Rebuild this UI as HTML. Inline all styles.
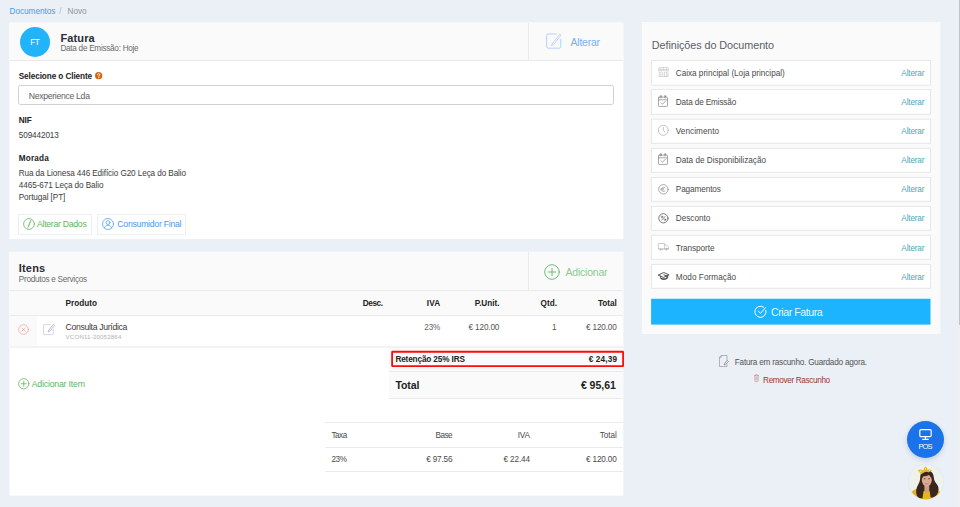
<!DOCTYPE html>
<html lang="pt">
<head>
<meta charset="utf-8">
<title>Fatura - Novo Documento</title>
<style>
html,body{margin:0;padding:0;}
html{width:960px;height:507px;overflow:hidden;background:#ebeff6;}
body{width:960px;height:507px;overflow:hidden;position:relative;background:#ebeff6;font-family:"Liberation Sans",sans-serif;color:#333;}
.t{position:absolute;white-space:nowrap;line-height:12px;font-family:"Liberation Sans",sans-serif;}
.b{position:absolute;box-sizing:border-box;}
svg{position:absolute;overflow:visible;}
.card{background:#fff;}
.hd{background:#fafafa;}
.ln{position:absolute;background:#e8eaec;}
.row{position:absolute;box-sizing:border-box;left:651.3px;width:279.4px;height:25.9px;background:#fff;border:1px solid #e6e6e6;}

</style>
</head>
<body>
<!-- left card 1 : Fatura / cliente -->
<svg style="left:0;top:0;" width="960" height="507" viewBox="0 0 960 507"><rect x="9.47" y="22.6" width="613.83" height="216.5" fill="#fff"/><rect x="9.47" y="22.6" width="613.83" height="37.4" fill="#fafafa"/>
<rect x="9.47" y="251.8" width="613.83" height="243.9" fill="#fff"/><rect x="9.47" y="251.8" width="613.83" height="64.2" fill="#fafafa"/>
<rect x="641.9" y="22" width="298.4" height="312" fill="#fafafa"/></svg>
<div class="ln" style="left:9.5px;top:59.8px;width:613.7px;height:1px;"></div>
<div class="ln" style="left:528px;top:23px;width:1px;height:37px;"></div>
<div class="b" style="left:20px;top:27.2px;width:30px;height:30px;border-radius:50%;background:#22b4fa;"></div>
<!-- edit icon (header) -->
<svg style="left:546px;top:33px;" width="16" height="16" viewBox="0 0 16 16" fill="none" stroke="#b0caf8" stroke-width="0.900" stroke-linecap="round" stroke-linejoin="round">
<path d="M14.800 6.200v7.400a1.600 1.600 0 0 1-1.600 1.600H2.200a1.600 1.600 0 0 1-1.600-1.600V2.600a1.600 1.600 0 0 1 1.600-1.600h8"/>
<path d="M6.170 10.910L13.770 1.110l1.260.980L7.430 11.890l-1.700.600z" stroke-width="0.750"/>
</svg>
<!-- help icon -->
<svg style="left:94.800px;top:72.400px;" width="7.300" height="7.300" viewBox="0 0 7 7"><circle cx="3.500" cy="3.500" r="3.450" fill="#d9630c"/>
<path d="M2.400 2.700c0-.75.500-1.100 1.100-1.100s1.100.35 1.100 1c0 .75-1 .85-1 1.600" fill="none" stroke="#fff" stroke-width="0.900" stroke-linecap="round"/><circle cx="3.600" cy="5.450" r="0.550" fill="#fff"/></svg>
<!-- input -->
<div class="b" style="left:18.3px;top:85.4px;width:596px;height:19.2px;border:1px solid #d1d1d1;border-radius:2.500px;background:#fff;"></div>
<!-- buttons -->
<div class="b" style="left:18.3px;top:214px;width:73.4px;height:21px;border:1px solid #efefef;background:#fff;"></div>
<div class="b" style="left:97px;top:214px;width:88.8px;height:21px;border:1px solid #efefef;background:#fff;"></div>
<svg style="left:22.5px;top:218.4px;" width="12" height="12" viewBox="0 0 12 12" fill="none" stroke="#62b562" stroke-width="0.8" stroke-linecap="round">
<circle cx="6" cy="6" r="5.4"/><path d="M7.4 2.6L5 8.6l-.3 1 .8-.7 2.5-6z" stroke-width="0.6"/>
</svg>
<svg style="left:102px;top:218.4px;" width="12" height="12" viewBox="0 0 12 12" fill="none" stroke="#5b9ff0" stroke-width="0.8" stroke-linecap="round">
<circle cx="6" cy="6" r="5.5"/><circle cx="6" cy="4.6" r="1.9"/><path d="M2.4 10c.5-2 2-2.7 3.6-2.7s3.1.7 3.6 2.7"/>
</svg>

<!-- left card 2 : Itens -->
<div class="ln" style="left:9.5px;top:290px;width:613.7px;height:1px;"></div>
<div class="ln" style="left:528px;top:252px;width:1px;height:38px;"></div>
<div class="ln" style="left:9.5px;top:315px;width:613.7px;height:1px;"></div>
<div class="b hd" style="left:9.5px;top:316px;width:27.5px;height:30px;"></div>
<div class="ln" style="left:9.5px;top:346px;width:613.7px;height:2px;background:#f3f3f3;"></div>
<!-- add icon header -->
<svg style="left:543.5px;top:263.7px;" width="16" height="16" viewBox="0 0 16 16" fill="none" stroke="#62b562" stroke-width="0.9" stroke-linecap="round">
<circle cx="8" cy="8" r="7.300"/><path d="M8 4.300v7.400M4.300 8h7.400"/>
</svg>
<!-- delete icon -->
<svg style="left:17.600px;top:323.750px;" width="11" height="11" viewBox="0 0 11 11" fill="none" stroke="#f5a2a2" stroke-width="0.750" stroke-linecap="round">
<circle cx="5.500" cy="5.500" r="4.850"/><path d="M3.900 3.900l3.200 3.200M7.100 3.900l-3.200 3.200"/>
</svg>
<!-- row edit icon -->
<svg style="left:42.500px;top:322.700px;" width="12.500" height="12" viewBox="0 0 12.500 12" fill="none" stroke="#c6c8e6" stroke-width="0.800" stroke-linecap="round" stroke-linejoin="round">
<path d="M10.200 6.400v4.700a.5.500 0 0 1-.5.500H1.100a.5.500 0 0 1-.5-.5V2.200a.5.500 0 0 1 .5-.5h6"/>
<path d="M10.600 1.700l.9.900-4.900 5.700-1.400.6.400-1.500z" stroke="#a9abc2"/>
</svg>
<!-- totals block -->
<div class="b hd" style="left:388.700px;top:348px;width:234.500px;height:50.400px;"></div>
<div class="ln" style="left:388.700px;top:370.700px;width:234.500px;height:1px;"></div>
<div class="ln" style="left:388.700px;top:397.800px;width:234.500px;height:1px;"></div>
<svg style="left:0;top:0;" width="960" height="507" viewBox="0 0 960 507"><rect x="392.1" y="351.75" width="231" height="14.3" rx="0.4" fill="none" stroke="#fb0d0d" stroke-width="1.8"/></svg>
<!-- add item icon -->
<svg style="left:17.750px;top:377.850px;" width="11.500" height="11.500" viewBox="0 0 11 11" fill="none" stroke="#62b562" stroke-width="0.750" stroke-linecap="round">
<circle cx="5.500" cy="5.500" r="4.900"/><path d="M5.500 3v5M3 5.500h5"/>
</svg>
<!-- tax table lines -->
<div class="ln" style="left:325px;top:422.200px;width:298.200px;height:1px;"></div>
<div class="ln" style="left:325px;top:446.700px;width:298.200px;height:1px;"></div>
<div class="ln" style="left:325px;top:470.800px;width:298.200px;height:1px;"></div>

<!-- right card -->
<!-- settings rows -->
<svg style="left:0;top:0;" width="960" height="507" viewBox="0 0 960 507">
<rect x="651.4" y="60.50" width="279.1" height="24.70" fill="#fff" stroke="#e7e7e7" stroke-width="1"/>
<rect x="651.4" y="89.64" width="279.1" height="24.66" fill="#fff" stroke="#e7e7e7" stroke-width="1"/>
<rect x="651.4" y="119.20" width="279.1" height="24.10" fill="#fff" stroke="#e7e7e7" stroke-width="1"/>
<rect x="651.4" y="148.40" width="279.1" height="23.90" fill="#fff" stroke="#e7e7e7" stroke-width="1"/>
<rect x="651.4" y="177.50" width="279.1" height="23.80" fill="#fff" stroke="#e7e7e7" stroke-width="1"/>
<rect x="651.4" y="206.50" width="279.1" height="23.80" fill="#fff" stroke="#e7e7e7" stroke-width="1"/>
<rect x="651.4" y="235.40" width="279.1" height="23.90" fill="#fff" stroke="#e7e7e7" stroke-width="1"/>
<rect x="651.4" y="264.40" width="279.1" height="23.90" fill="#fff" stroke="#e7e7e7" stroke-width="1"/>
<rect x="651.1" y="298.75" width="279.4" height="25.85" fill="#1cb4ff"/>
</svg>
<!-- create button -->
<svg style="left:753.5px;top:305.2px;" width="13" height="13" viewBox="0 0 13 13" fill="none" stroke="#fff" stroke-width="1" stroke-linecap="round" stroke-linejoin="round">
<path d="M11.900 5.400a5.600 5.600 0 1 1-2.300-3.300"/><path d="M4.300 6.200l2.200 2.200 5-5.800"/>
</svg>
<!-- POS -->
<div class="b" style="left:907px;top:421px;width:37px;height:37px;border-radius:50%;background:#1a73e8;box-shadow:0 2px 5px rgba(60,80,130,.22);"></div>
<svg style="left:919px;top:429px;" width="13" height="11" viewBox="0 0 13 11" fill="none" stroke="#fff" stroke-width="1.200" stroke-linecap="round" stroke-linejoin="round">
<rect x="0.800" y="0.700" width="11.400" height="7" rx="1.200"/><path d="M6.500 7.700v2.400M3.700 10.300h5.600"/>
</svg>
<!-- scrollbar -->
<div class="b" style="left:959px;top:0;width:1px;height:507px;background:#f0f0f1;"></div>
<div class="b" style="left:959px;top:0;width:1px;height:325px;background:#c2c3c5;"></div>
<!-- right panel row icons -->
<!-- store -->
<svg style="left:658px;top:67.100px;" width="11" height="9.900" viewBox="0 0 11 9" preserveAspectRatio="none" fill="none" stroke="#cbcbcb" stroke-width="0.650" stroke-linejoin="round">
<path d="M1.300 0.400h8.400l.9 1.800v.9H.4v-.9z"/><path d="M.4 2.200h10.200M2.900 .4l-.4 2.700M5.500 .4v2.700M8.100 .4l.4 2.700"/>
<path d="M1.100 3.300v5.200h8.800V3.300M.4 8.500h10.200"/><rect x="2.200" y="4.700" width="2.600" height="2.200"/><path d="M6.500 8.500V4.700h2.200v3.800"/>
</svg>
<!-- calendar check 1 -->
<svg style="left:658px;top:95.200px;" width="10" height="12" viewBox="0 0 10 12" fill="none" stroke="#8a8a8a" stroke-width="0.750" stroke-linecap="round" stroke-linejoin="round">
<rect x="0.500" y="2.200" width="9" height="9.200" rx="0.600"/><path d="M.5 4.800h9"/><path d="M2.900 3V.9M7.100 3V.9" stroke-width="0.900"/><circle cx="2.900" cy="1.300" r="0.800" stroke-width="0.500"/><circle cx="7.100" cy="1.300" r="0.800" stroke-width="0.500"/>
<path d="M3 7.800l1.500 1.500 2.800-3"/>
</svg>
<!-- clock -->
<svg style="left:658.100px;top:125.050px;" width="11" height="11" viewBox="0 0 11 11" fill="none" stroke="#b0aeb8" stroke-width="0.750" stroke-linecap="round" stroke-linejoin="round">
<circle cx="5.300" cy="5.300" r="5"/><path d="M5.300 2.300v3.100l1.700 1.600"/>
</svg>
<!-- calendar check 2 -->
<svg style="left:658px;top:153.100px;" width="10" height="12" viewBox="0 0 10 12" fill="none" stroke="#8a8a8a" stroke-width="0.750" stroke-linecap="round" stroke-linejoin="round">
<rect x="0.500" y="2.200" width="9" height="9.200" rx="0.600"/><path d="M.5 4.800h9"/><path d="M2.900 3V.9M7.100 3V.9" stroke-width="0.900"/><circle cx="2.900" cy="1.300" r="0.800" stroke-width="0.500"/><circle cx="7.100" cy="1.300" r="0.800" stroke-width="0.500"/>
<path d="M3 7.800l1.500 1.500 2.800-3"/>
</svg>
<!-- euro -->
<svg style="left:658.200px;top:183.700px;" width="11" height="11" viewBox="0 0 11 11" fill="none" stroke="#8c8c8c" stroke-width="0.750" stroke-linecap="round" stroke-linejoin="round">
<circle cx="5.400" cy="5.300" r="4.700"/><path d="M7 3.600c-1.700-1.200-3.300-.2-3.300 1.700s1.600 2.900 3.300 1.700M2.900 4.700h2.800M2.900 5.900h2.500" stroke-width="0.650"/>
</svg>
<!-- percent -->
<svg style="left:658px;top:212.600px;" width="11" height="11" viewBox="0 0 11 11" fill="none" stroke="#555" stroke-width="0.800" stroke-linecap="round" stroke-linejoin="round">
<circle cx="5.400" cy="5.300" r="4.600"/><path d="M7.200 3.400L3.600 7.200" stroke-width="0.700"/><circle cx="3.900" cy="3.900" r="0.800" stroke-width="0.600"/><circle cx="6.900" cy="6.700" r="0.800" stroke-width="0.600"/>
</svg>
<!-- truck -->
<svg style="left:658px;top:243px;" width="11" height="8" viewBox="0 0 11 8" fill="none" stroke="#bdbdbd" stroke-width="0.750" stroke-linecap="round" stroke-linejoin="round">
<path d="M.4 5.800V.5h6.300v5.300"/><path d="M6.700 2h2l1.800 2.100v1.700H6.700"/><path d="M.4 5.800h10.100" stroke="#b0b0b0"/>
<circle cx="2.500" cy="6.600" r="0.900" fill="#aaa" stroke="none"/><circle cx="4.400" cy="6.600" r="0.700" fill="#bbb" stroke="none"/><circle cx="8.600" cy="6.600" r="0.900" fill="#aaa" stroke="none"/>
</svg>
<!-- graduation cap -->
<svg style="left:657.800px;top:272.300px;" width="12" height="8" viewBox="0 0 12 8" fill="none" stroke="#333" stroke-width="0.800" stroke-linecap="round" stroke-linejoin="round">
<path d="M.5 2.900L5.800.5l5.300 2.400-5.300 2.400z"/><path d="M2.700 4.100v2c.9 1.100 5.300 1.100 6.200 0v-2" /><path d="M3 6.600c1.200.9 4.400.9 5.600 0" stroke-width="1.100"/><path d="M5.800 2.900l3.900 1.300v2"/>
</svg>
<!-- draft icon -->
<svg style="left:719px;top:355px;" width="10" height="12" viewBox="0 0 10 12" fill="none" stroke="#9a9a9a" stroke-width="0.700" stroke-linecap="round" stroke-linejoin="round">
<path d="M8 5V.5H2.300L.5 2.300v9.200H8V9.600"/><path d="M2.300.5v1.800H.5"/><path d="M8.600 5.600l.9.900-3 3-1.300.4.400-1.300z" stroke="#777"/>
</svg>
<!-- trash icon -->
<svg style="left:754.200px;top:374.300px;" width="5" height="8" viewBox="0 0 5 8" fill="none" stroke="#cf9a9a" stroke-width="0.700" stroke-linecap="round" stroke-linejoin="round">
<path d="M.4 1.600h4.200M.8 1.600v5.500c0 .3.200.5.500.5h2.400c.3 0 .5-.2.500-.5V1.600M1.700 1.600V.6h1.600v1M1.900 3v3M3.100 3v3"/>
</svg>
<!-- avatar -->
<svg style="left:908px;top:464px;" width="36" height="36" viewBox="0 0 36 36">
<defs><clipPath id="av"><circle cx="17.900" cy="17.900" r="17.400"/></clipPath></defs>
<circle cx="17.900" cy="17.900" r="17.900" fill="#d9e8f6"/>
<g clip-path="url(#av)">
<rect x="0" y="0" width="36" height="36" fill="#eff1eb"/>
<path d="M2.500 31c.5-3.500 3-5.400 7-6.400l9 1.400 9-.6c3 .6 5 2 5.500 4.600l-3 4-11 3-12-2z" fill="#e6b41f"/>
<path d="M18.800 6.200c4.300 0 6.700 3 7 7.200.2 3.300 1.600 4.800 3.400 7.300 2.200 3.200 1.500 7.300-.6 10.300-1.200 1.700-4.300 3-6 2.300l-1-6.300h-6l-1.200 7.500c-2.200.5-4.700-.8-5.600-3-1.400-3.400-.5-7.700 1.300-10.800 1.400-2.400 2-4.200 2.100-7.300.2-4.200 2.300-7.200 6.600-7.200z" fill="#3a261d"/>
<path d="M16.400 21.500h4.800v5.800l-2.400 1.700-2.400-1.700z" fill="#cf9c84"/>
<ellipse cx="18.800" cy="16" rx="5" ry="6.400" fill="#dbaa93"/>
<path d="M13.800 15.500c-.2-4.300 1.800-6.800 5-6.800s5.200 2.500 5 6.800c-.8-2.400-1.700-3.900-2.900-4.600-1.500.9-4.400 1.400-5.300 1.300-.9.700-1.500 1.900-1.800 3.300z" fill="#3a261d"/>
<path d="M16.600 27.400l2.200 1.600 2.400-1.600 1.300 9h-7z" fill="#e6b41f"/>
<ellipse cx="16.600" cy="14.700" rx="0.900" ry="0.550" fill="#4a3228"/><ellipse cx="21" cy="14.700" rx="0.900" ry="0.550" fill="#4a3228"/>
<path d="M17.300 19.600c.9.500 2.100.5 3 0" stroke="#b8706a" stroke-width="0.700" fill="none" stroke-linecap="round"/>
<path d="M9.800 6.500c1.500-1.800 4.300-.8 5.500.2.300-2 1.300-3.700 2.300-4.200 1 .6 1.700 1.800 2 3.200 1.500-.6 3.600-.3 4.700 1.300-1.300.2-2.700.6-3.600 1.400-1.200-.9-3.500-.9-4.700.2-.9.900-2 1.500-3.300 1.500-.3-1.200-1.700-2.600-2.900-3.600z" fill="#e4b730"/>
<circle cx="12.800" cy="7.300" r="0.700" fill="#f6e6a0"/><circle cx="17.500" cy="4.800" r="0.700" fill="#f6e6a0"/><circle cx="21.500" cy="6.500" r="0.600" fill="#f6e6a0"/>
</g>
</svg>

<span class="t" id="t0" style="top:6px;font-size:8.2px;color:#3f9bf3;letter-spacing:-0.007px;left:9.50px;">Documentos</span>
<span class="t" id="t1" style="top:6px;font-size:8.2px;color:#b5bac2;left:59.20px;">/</span>
<span class="t" id="t2" style="top:6px;font-size:8.2px;color:#8f9298;letter-spacing:-0.031px;left:67.60px;">Novo</span>
<span class="t" id="t3" style="top:37px;font-size:8.2px;color:#fff;letter-spacing:-0.658px;left:14.67px;width:40px;text-align:center;">FT</span>
<span class="t" id="t4" style="top:32px;font-size:11px;color:#2b2b33;font-weight:700;letter-spacing:0.129px;left:60.40px;">Fatura</span>
<span class="t" id="t5" style="top:43px;font-size:8.2px;color:#6a6a6a;letter-spacing:-0.273px;left:60.40px;">Data de Emissão: Hoje</span>
<span class="t" id="t6" style="top:36px;font-size:10.5px;color:#78aef5;letter-spacing:-0.248px;left:570.60px;">Alterar</span>
<span class="t" id="t7" style="top:71px;font-size:8.2px;color:#222;font-weight:700;letter-spacing:-0.094px;left:18.75px;">Selecione o Cliente</span>
<span class="t" id="t8" style="top:90px;font-size:8.7px;color:#5e5e5e;letter-spacing:-0.319px;left:28.75px;">Nexperience Lda</span>
<span class="t" id="t9" style="top:115px;font-size:8.2px;color:#222;font-weight:700;letter-spacing:-0.068px;left:18.75px;">NIF</span>
<span class="t" id="t10" style="top:130px;font-size:8.2px;color:#3c3c3c;letter-spacing:-0.109px;left:18.75px;">509442013</span>
<span class="t" id="t11" style="top:153px;font-size:8.2px;color:#222;font-weight:700;letter-spacing:0.179px;left:18.75px;">Morada</span>
<span class="t" id="t12" style="top:168px;font-size:8.2px;color:#3c3c3c;letter-spacing:-0.108px;left:18.75px;">Rua da Lionesa 446 Edifício G20 Leça do Balio</span>
<span class="t" id="t13" style="top:180px;font-size:8.2px;color:#3c3c3c;letter-spacing:-0.077px;left:18.75px;">4465-671 Leça do Balio</span>
<span class="t" id="t14" style="top:192px;font-size:8.2px;color:#3c3c3c;letter-spacing:-0.100px;left:18.75px;">Portugal [PT]</span>
<span class="t" id="t15" style="top:218px;font-size:8.7px;color:#62b562;letter-spacing:-0.279px;left:37.00px;">Alterar Dados</span>
<span class="t" id="t16" style="top:218px;font-size:8.7px;color:#4a98ee;letter-spacing:-0.256px;left:117.30px;">Consumidor Final</span>
<span class="t" id="t17" style="top:262px;font-size:11px;color:#2b2b33;font-weight:700;letter-spacing:0.183px;left:18.75px;">Itens</span>
<span class="t" id="t18" style="top:274px;font-size:8.2px;color:#6a6a6a;letter-spacing:-0.273px;left:18.75px;">Produtos e Serviços</span>
<span class="t" id="t19" style="top:266px;font-size:10.5px;color:#8ccc8c;letter-spacing:-0.231px;left:565.60px;">Adicionar</span>
<span class="t" id="t20" style="top:298px;font-size:8.2px;color:#222;font-weight:700;letter-spacing:-0.412px;right:577.41px;">Desc.</span>
<span class="t" id="t21" style="top:298px;font-size:8.2px;color:#222;font-weight:700;letter-spacing:0.151px;right:519.65px;">IVA</span>
<span class="t" id="t22" style="top:298px;font-size:8.2px;color:#222;font-weight:700;letter-spacing:-0.039px;right:460.64px;">P.Unit.</span>
<span class="t" id="t23" style="top:298px;font-size:8.2px;color:#222;font-weight:700;letter-spacing:0.056px;right:402.94px;">Qtd.</span>
<span class="t" id="t24" style="top:298px;font-size:8.2px;color:#222;font-weight:700;letter-spacing:-0.051px;right:343.35px;">Total</span>
<span class="t" id="t25" style="top:298px;font-size:8.2px;color:#222;font-weight:700;letter-spacing:0.001px;left:65.60px;">Produto</span>
<span class="t" id="t26" style="top:321px;font-size:8.7px;color:#3c3c3c;letter-spacing:-0.337px;left:65.60px;">Consulta Jurídica</span>
<span class="t" id="t27" style="top:331px;font-size:6.2px;color:#b2b2b2;letter-spacing:0.134px;left:65.60px;">VCON11-20052864</span>
<span class="t" id="t28" style="top:322px;font-size:8.2px;color:#666;letter-spacing:-0.264px;right:520.06px;">23%</span>
<span class="t" id="t29" style="top:322px;font-size:8.2px;color:#555;letter-spacing:-0.153px;right:460.75px;">€ 120.00</span>
<span class="t" id="t30" style="top:322px;font-size:8.2px;color:#555;right:403.40px;">1</span>
<span class="t" id="t31" style="top:322px;font-size:8.2px;color:#555;letter-spacing:-0.172px;right:343.47px;">€ 120.00</span>
<span class="t" id="t32" style="top:354px;font-size:8.2px;color:#222;font-weight:700;letter-spacing:-0.128px;left:395.40px;">Retenção 25% IRS</span>
<span class="t" id="t33" style="top:354px;font-size:8.2px;color:#222;font-weight:700;letter-spacing:0.167px;right:342.83px;">€ 24,39</span>
<span class="t" id="t34" style="top:379px;font-size:10.5px;color:#222;font-weight:700;letter-spacing:-0.062px;left:395.40px;">Total</span>
<span class="t" id="t35" style="top:379px;font-size:10.5px;color:#222;font-weight:700;letter-spacing:-0.021px;right:344.22px;">€ 95,61</span>
<span class="t" id="t36" style="top:378px;font-size:8.7px;color:#62b562;letter-spacing:-0.174px;left:31.70px;">Adicionar Item</span>
<span class="t" id="t37" style="top:430px;font-size:8.2px;color:#4a4a4a;letter-spacing:-0.474px;left:331.40px;">Taxa</span>
<span class="t" id="t38" style="top:430px;font-size:8.2px;color:#4a4a4a;letter-spacing:-0.568px;right:508.07px;">Base</span>
<span class="t" id="t39" style="top:430px;font-size:8.2px;color:#4a4a4a;letter-spacing:-0.165px;right:430.16px;">IVA</span>
<span class="t" id="t40" style="top:430px;font-size:8.2px;color:#4a4a4a;letter-spacing:-0.059px;right:343.26px;">Total</span>
<span class="t" id="t41" style="top:454px;font-size:8.2px;color:#4a4a4a;letter-spacing:-0.430px;left:331.40px;">23%</span>
<span class="t" id="t42" style="top:454px;font-size:8.2px;color:#4a4a4a;letter-spacing:-0.190px;right:507.69px;">€ 97.56</span>
<span class="t" id="t43" style="top:454px;font-size:8.2px;color:#4a4a4a;letter-spacing:-0.133px;right:430.13px;">€ 22.44</span>
<span class="t" id="t44" style="top:454px;font-size:8.2px;color:#4a4a4a;letter-spacing:-0.159px;right:343.36px;">€ 120.00</span>
<span class="t" id="t45" style="top:39px;font-size:10.8px;color:#5b5f66;letter-spacing:-0.063px;left:651.80px;">Definições do Documento</span>
<span class="t" id="t46" style="top:68px;font-size:8.2px;color:#4a4a4a;letter-spacing:-0.024px;left:675.80px;">Caixa principal (Loja principal)</span>
<span class="t" id="t47" style="top:68px;font-size:8.2px;color:#4ea6b8;letter-spacing:-0.161px;right:35.66px;">Alterar</span>
<span class="t" id="t48" style="top:97px;font-size:8.2px;color:#4a4a4a;letter-spacing:-0.131px;left:675.80px;">Data de Emissão</span>
<span class="t" id="t49" style="top:97px;font-size:8.2px;color:#4ea6b8;letter-spacing:-0.161px;right:35.66px;">Alterar</span>
<span class="t" id="t50" style="top:126px;font-size:8.2px;color:#4a4a4a;letter-spacing:0.050px;left:675.80px;">Vencimento</span>
<span class="t" id="t51" style="top:126px;font-size:8.2px;color:#4ea6b8;letter-spacing:-0.161px;right:35.66px;">Alterar</span>
<span class="t" id="t52" style="top:155px;font-size:8.2px;color:#4a4a4a;letter-spacing:0.007px;left:675.80px;">Data de Disponibilização</span>
<span class="t" id="t53" style="top:155px;font-size:8.2px;color:#4ea6b8;letter-spacing:-0.161px;right:35.66px;">Alterar</span>
<span class="t" id="t54" style="top:184px;font-size:8.2px;color:#4a4a4a;letter-spacing:-0.098px;left:675.80px;">Pagamentos</span>
<span class="t" id="t55" style="top:184px;font-size:8.2px;color:#4ea6b8;letter-spacing:-0.161px;right:35.66px;">Alterar</span>
<span class="t" id="t56" style="top:213px;font-size:8.2px;color:#4a4a4a;letter-spacing:0.001px;left:675.80px;">Desconto</span>
<span class="t" id="t57" style="top:213px;font-size:8.2px;color:#4ea6b8;letter-spacing:-0.161px;right:35.66px;">Alterar</span>
<span class="t" id="t58" style="top:243px;font-size:8.2px;color:#4a4a4a;letter-spacing:-0.070px;left:675.80px;">Transporte</span>
<span class="t" id="t59" style="top:243px;font-size:8.2px;color:#4ea6b8;letter-spacing:-0.161px;right:35.66px;">Alterar</span>
<span class="t" id="t60" style="top:272px;font-size:8.2px;color:#4a4a4a;letter-spacing:0.060px;left:675.80px;">Modo Formação</span>
<span class="t" id="t61" style="top:272px;font-size:8.2px;color:#4ea6b8;letter-spacing:-0.161px;right:35.66px;">Alterar</span>
<span class="t" id="t62" style="top:306px;font-size:10.6px;color:rgba(255,255,255,.92);letter-spacing:-0.443px;left:771.00px;">Criar Fatura</span>
<span class="t" id="t63" style="top:357px;font-size:8.2px;color:#555;letter-spacing:-0.221px;left:734.80px;">Fatura em rascunho. Guardado agora.</span>
<span class="t" id="t64" style="top:375px;font-size:8.2px;color:#a23434;letter-spacing:-0.354px;left:763.10px;">Remover Rascunho</span>
<span class="t" id="t65" style="top:441px;font-size:7.5px;color:#fff;letter-spacing:-0.881px;left:905.06px;width:40px;text-align:center;">POS</span>
</body>
</html>
